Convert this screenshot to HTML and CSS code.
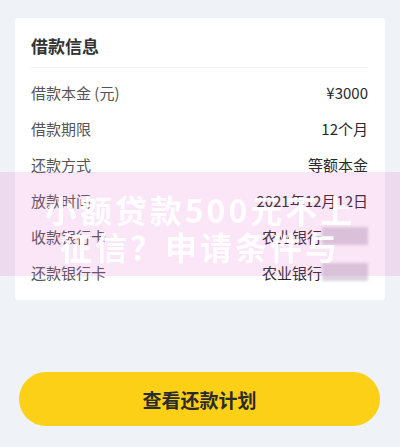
FILE: index.html
```html
<!DOCTYPE html>
<html lang="zh">
<head>
<meta charset="utf-8">
<link rel="stylesheet" href="styles.css">
</head>
<body>
<div class="page">
  <section class="card">
    <h2 class="card-title">借款信息</h2>
    <div class="rows">
      <div class="row"><span class="label">借款本金 (元)</span><span class="value">¥3000</span></div>
      <div class="row"><span class="label">借款期限</span><span class="value">12个月</span></div>
      <div class="row"><span class="label">还款方式</span><span class="value">等额本金</span></div>
      <div class="row"><span class="label">放款时间</span><span class="value">2021年12月12日</span></div>
      <div class="row"><span class="label">收款银行卡</span><span class="value">农业银行<span class="mask"></span></span></div>
      <div class="row"><span class="label">还款银行卡</span><span class="value">农业银行<span class="mask"></span></span></div>
    </div>
  </section>
  <button class="plan-btn">查看还款计划</button>
  <div class="watermark">
    <div class="wm-line">小额贷款500元不上</div>
    <div class="wm-line">征信？申请条件与</div>
  </div>
</div>
</body>
</html>
```
FILE: styles.css
```css
html, body {
  margin: 0;
  padding: 0;
}
body {
  width: 400px;
  height: 447px;
  background: #eff2f7;
  font-family: "Noto Sans CJK SC", "Noto Sans", sans-serif;
  overflow: hidden;
}
.page {
  position: relative;
  width: 400px;
  height: 447px;
  padding-top: 18px;
  box-sizing: border-box;
}
.card {
  margin: 0 15px;
  background: #fff;
  border-radius: 3px;
  padding: 16px 17px 10px 16px;
}
.card-title {
  margin: 0;
  font-size: 17px;
  line-height: 24px;
  font-weight: 700;
  color: #333;
  padding-bottom: 9px;
  border-bottom: 1px solid #f1f2f4;
}
.rows {
  padding-top: 6px;
}
.row {
  display: flex;
  justify-content: space-between;
  align-items: center;
  height: 36px;
  font-size: 15px;
}
.label {
  color: #555;
}
.value {
  color: #2a2a2a;
  font-weight: 400;
  display: flex;
  align-items: center;
}
.mask {
  display: inline-block;
  width: 46px;
  height: 18px;
  background: rgba(190, 175, 195, 0.55);
  filter: blur(1.5px);
}
.plan-btn {
  display: block;
  margin: 72px 20px 0 19px;
  width: 361px;
  height: 54px;
  border: none;
  border-radius: 27px;
  background: #fdd018;
  color: #2b2b2b;
  font-family: "Noto Sans CJK SC", "Noto Sans", sans-serif;
  font-size: 19px;
  font-weight: 700;
}
.watermark {
  position: absolute;
  left: 0;
  top: 172px;
  width: 400px;
  height: 104px;
  background: rgba(222, 88, 195, 0.15);
  display: flex;
  flex-direction: column;
  align-items: center;
  padding-top: 19px;
  box-sizing: border-box;
}
.wm-line {
  color: rgba(255, 255, 255, 0.92);
  font-size: 32px;
  font-weight: 700;
  line-height: 37px;
  letter-spacing: 3px;
  filter: blur(0.6px);
}
```
